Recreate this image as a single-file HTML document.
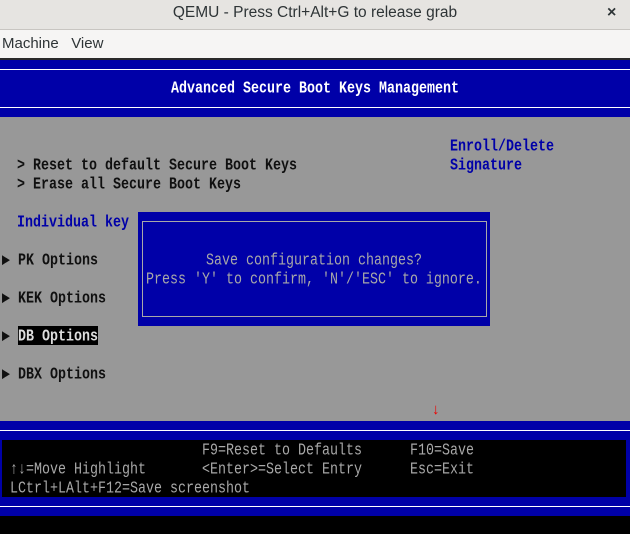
<!DOCTYPE html>
<html><head><meta charset="utf-8"><style>
*{margin:0;padding:0;box-sizing:border-box}
body{width:630px;height:534px;overflow:hidden;background:#000;position:relative;font-family:"Liberation Sans","DejaVu Sans",sans-serif}
.a{position:absolute}
.t{position:absolute;font-family:"Liberation Mono","DejaVu Sans Mono",monospace;font-size:13.33px;line-height:18px;height:18px;white-space:pre;transform:scaleY(1.25);transform-origin:center;font-weight:bold}
.k{color:#101010}.b{color:#0000a8}.g{color:#a8a8a8;font-weight:normal}.w{color:#fff;font-weight:normal}
</style></head><body>
<div class="a" style="left:0;top:0;width:630px;height:30px;background:#e6e4e1;border-bottom:1px solid #c8c5c1"></div>
<div class="a" style="left:0;top:1px;width:630px;text-align:center;font-size:15.5px;color:#2e3436;line-height:24px">QEMU - Press Ctrl+Alt+G to release grab</div>
<div class="a" style="left:607px;top:2px;font-size:16px;color:#2e3436;line-height:22px;font-weight:bold">×</div>
<div class="a" style="left:0;top:30px;width:630px;height:28px;background:#f6f5f4"></div>
<div class="a" style="left:2px;top:34px;font-size:15px;color:#2e3436;line-height:20px">Machine&nbsp;&nbsp;&nbsp;View</div>
<div class="a" style="left:0;top:58px;width:630px;height:2px;background:#2a2a2a"></div>
<div class="a" style="left:0;top:60px;width:630px;height:57px;background:#0000a8"></div>
<div class="a" style="left:0;top:69px;width:630px;height:39px;border-top:1px solid #fff;border-bottom:1px solid #fff"></div>
<div class="t w" style="left:0;width:630px;text-align:center;top:81px;font-weight:bold">Advanced Secure Boot Keys Management</div>
<div class="a" style="left:0;top:117px;width:630px;height:304px;background:#989898"></div>
<div class="t k" style="left:17px;top:158px">&gt; Reset to default Secure Boot Keys</div>
<div class="t k" style="left:17px;top:177px">&gt; Erase all Secure Boot Keys</div>
<div class="t b" style="left:450px;top:139px">Enroll/Delete</div>
<div class="t b" style="left:450px;top:158px">Signature</div>
<div class="t b" style="left:17px;top:215px">Individual key</div>
<div class="a" style="left:18px;top:326px;width:80px;height:19px;background:#000"></div>
<div class="t k" style="left:2px;top:253px">▶ PK Options</div>
<div class="t k" style="left:2px;top:291px">▶ KEK Options</div>
<div class="t k" style="left:2px;top:329px">▶ <span style="color:#ddd">DB Options</span></div>
<div class="t k" style="left:2px;top:367px">▶ DBX Options</div>
<div class="a" style="left:138px;top:212px;width:352px;height:114px;background:#0000a8"></div>
<div class="a" style="left:142px;top:221px;width:345px;height:96px;border:1px solid #a8a8a8"></div>
<div class="t g" style="left:138px;width:352px;text-align:center;top:253px">Save configuration changes?</div>
<div class="t g" style="left:146px;top:272px">Press 'Y' to confirm, 'N'/'ESC' to ignore.</div>
<div class="a" style="left:432px;top:402px;color:#e00;font-size:15px;line-height:15px;font-weight:bold">↓</div>
<div class="a" style="left:0;top:421px;width:630px;height:95px;background:#0000a8"></div>
<div class="a" style="left:0;top:430px;width:630px;height:77px;border-top:1px solid #fff;border-bottom:1px solid #fff"></div>
<div class="a" style="left:2px;top:440px;width:624px;height:57px;background:#000"></div>
<div class="t g" style="left:202px;top:443px">F9=Reset to Defaults</div>
<div class="t g" style="left:410px;top:443px">F10=Save</div>
<div class="t g" style="left:10px;top:462px">↑↓=Move Highlight</div>
<div class="t g" style="left:202px;top:462px">&lt;Enter&gt;=Select Entry</div>
<div class="t g" style="left:410px;top:462px">Esc=Exit</div>
<div class="t g" style="left:10px;top:481px">LCtrl+LAlt+F12=Save screenshot</div>
</body></html>
